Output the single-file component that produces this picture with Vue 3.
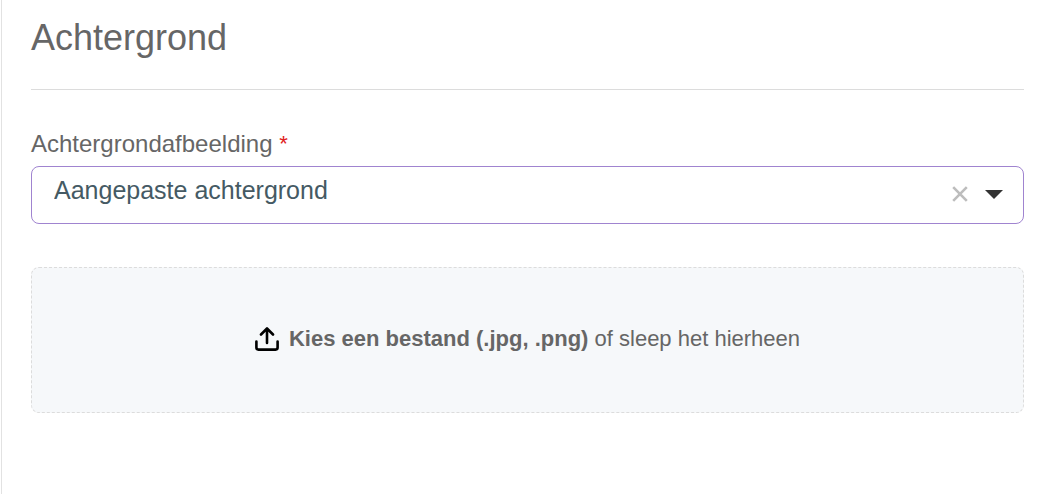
<script setup>
import { ref } from 'vue'

const background = ref('custom')
const fileInput = ref(null)

function clearBackground() {
  background.value = ''
}

function onDrop(event) {
  fileInput.value.files = event.dataTransfer.files
}
</script>

<template>
  <main class="panel">
    <h1 class="title">Achtergrond</h1>

    <div class="field">
      <label class="field-label" for="background">Achtergrondafbeelding <span class="required">*</span></label>
      <div class="select-box">
        <select id="background" v-model="background" class="select" required>
          <option value="custom">Aangepaste achtergrond</option>
        </select>
        <button class="clear" type="button" aria-label="Wissen" @click="clearBackground">
          <svg width="16" height="16" viewBox="0 0 16 16" fill="none" stroke="#bdbdbd" stroke-width="2.6">
            <path d="M1.2 1.2L14.8 14.8M14.8 1.2L1.2 14.8" />
          </svg>
        </button>
        <svg class="caret" width="18" height="9" viewBox="0 0 18 9" aria-hidden="true">
          <path d="M0 0H18L9 9Z" fill="#333" />
        </svg>
      </div>
    </div>

    <label class="dropzone" @dragover.prevent @drop.prevent="onDrop">
      <input ref="fileInput" class="file-input" type="file" accept=".jpg,.png" />
      <svg class="upload" width="24" height="24" viewBox="0 0 24 24" fill="none" stroke="#000" stroke-width="2.6" stroke-linecap="round" stroke-linejoin="round" aria-hidden="true">
        <path d="M1.4 14.5V20.6Q1.4 22.6 3.4 22.6H20.6Q22.6 22.6 22.6 20.6V14.5" />
        <path d="M12 16V2M6 7.5L12 1.5L18 7.5" />
      </svg>
      <span><strong>Kies een bestand (.jpg, .png)</strong> of sleep het hierheen</span>
    </label>
  </main>
</template>

<style>
body {
  margin: 0;
  background: #fff;
}
</style>

<style scoped>
.panel {
  box-sizing: border-box;
  min-height: 100vh;
  margin-left: 1px;
  padding: 16px 20px 0 29px;
  border-left: 1px solid #e2e2e2;
  color: #666;
  font-family: "Liberation Sans", Arial, sans-serif;
}

.title {
  margin: 0;
  padding-bottom: 29px;
  border-bottom: 1px solid #dcdcdc;
  font-size: 36px;
  font-weight: 400;
  line-height: 44px;
}

.field {
  margin-top: 40px;
}

.field-label {
  display: block;
  margin-bottom: 8px;
  font-size: 24px;
  line-height: 28px;
}

.required {
  color: #e02020;
  font-size: 22px;
  vertical-align: top;
}

.select-box {
  display: flex;
  align-items: center;
  box-sizing: border-box;
  height: 58px;
  padding: 0 20px 2px 0;
  border: 1px solid #a084d0;
  border-radius: 8px;
  background: #fff;
}

.select {
  flex: 1;
  min-width: 0;
  height: 100%;
  padding: 0 22px 8px;
  border: 0;
  outline: 0;
  appearance: none;
  background: transparent;
  color: #455a64;
  font-family: inherit;
  font-size: 25px;
}

.clear {
  display: flex;
  margin-right: 17px;
  padding: 0;
  border: 0;
  background: none;
  cursor: pointer;
}

.caret {
  pointer-events: none;
}

.dropzone {
  display: flex;
  align-items: center;
  justify-content: center;
  gap: 10px;
  box-sizing: border-box;
  min-height: 146px;
  margin-top: 43px;
  padding-bottom: 2px;
  border: 1px dashed #dcdcdc;
  border-radius: 8px;
  background: #f6f8fa;
  font-size: 22px;
  line-height: 28px;
  cursor: pointer;
}

.file-input {
  position: absolute;
  width: 1px;
  height: 1px;
  opacity: 0;
}

.upload {
  flex: none;
}
</style>
